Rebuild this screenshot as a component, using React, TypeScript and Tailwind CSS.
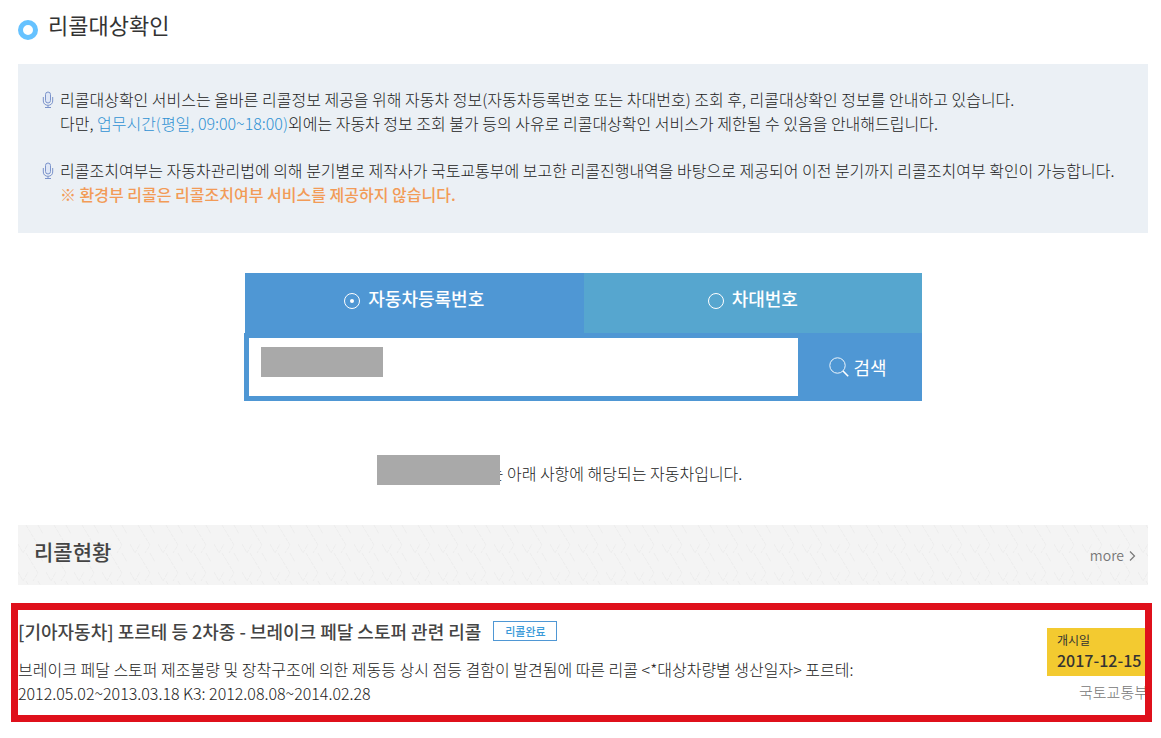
import { useState } from "react";

interface NoticeProps {
  children: React.ReactNode;
}

const MicIcon = () => (
  <svg className="mt-1 h-[18px] w-3 shrink-0" viewBox="0 0 12 18" fill="none" stroke="#7b93cb" aria-hidden="true">
    <rect x="3.5" y="1" width="5" height="11" rx="2.5" fill="#dfe7f6" />
    <path d="M1.3 6v4c0 2.6 2 4.3 4.7 4.3s4.7-1.7 4.7-4.3V6M6 14.3v2M3 16.5h6" />
  </svg>
);

const Notice: React.FC<NoticeProps> = ({ children }) => (
  <li className="flex gap-1.5">
    <MicIcon />
    <p className="leading-6">{children}</p>
  </li>
);

interface TabProps {
  label: string;
  value: string;
  bg: string;
  checked: boolean;
  onSelect: (value: string) => void;
}

const Tab: React.FC<TabProps> = ({ label, value, bg, checked, onSelect }) => (
  <label className={`flex h-15 flex-1 items-center justify-center gap-2 pb-2.5 text-[18px] font-medium text-white ${bg}`}>
    <input
      type="radio"
      name="searchType"
      value={value}
      checked={checked}
      onChange={() => onSelect(value)}
      className="mt-1.5 grid size-4 appearance-none place-items-center rounded-full border border-white before:size-1 before:rounded-full checked:before:bg-white"
    />
    {label}
  </label>
);

export default function RecallCheckPage() {
  const [searchType, setSearchType] = useState("plate");

  return (
    <main className="pt-2 pr-[13px] pb-4 pl-[18px] font-['Noto_Sans_CJK_KR','Noto_Sans',sans-serif] text-[16px] font-light text-[#222]">
      {/* Title */}
      <header className="flex items-center gap-2.5">
        <span className="mt-2 size-5 rounded-full border-[5px] border-[#66c2ff]" />
        <h1 className="pb-1 text-[22px] leading-8 font-normal text-[#333]">리콜대상확인</h1>
      </header>

      {/* Notice */}
      <ul className="mt-5 space-y-[23px] bg-[#ebf0f5] px-6 pt-[23px] pb-[27px]">
        <Notice>
          리콜대상확인 서비스는 올바른 리콜정보 제공을 위해 자동차 정보(자동차등록번호 또는 차대번호) 조회 후, 리콜대상확인 정보를 안내하고 있습니다.
          <br />
          다만, <span className="text-[#3192d3]">업무시간(평일, 09:00~18:00)</span>외에는 자동차 정보 조회 불가 등의 사유로 리콜대상확인 서비스가 제한될 수 있음을 안내해드립니다.
        </Notice>
        <Notice>
          리콜조치여부는 자동차관리법에 의해 분기별로 제작사가 국토교통부에 보고한 리콜진행내역을 바탕으로 제공되어 이전 분기까지 리콜조치여부 확인이 가능합니다.
          <br />
          <strong className="font-medium text-[#f29b57]">※ 환경부 리콜은 리콜조치여부 서비스를 제공하지 않습니다.</strong>
        </Notice>
      </ul>

      {/* Search */}
      <form className="mx-auto mt-10 w-full max-w-[678px]" onSubmit={(e) => e.preventDefault()}>
        <div className="ml-px flex">
          <Tab label="자동차등록번호" value="plate" bg="bg-[#4f97d4]" checked={searchType === "plate"} onSelect={setSearchType} />
          <Tab label="차대번호" value="vin" bg="bg-[#56a6cf]" checked={searchType === "vin"} onSelect={setSearchType} />
        </div>
        <div className="relative flex h-[68px] bg-[#4f97d4] py-[5px] pl-[5px]">
          <input type="text" aria-label="자동차등록번호" className="min-w-0 flex-1 bg-white px-3 outline-none" />
          <span className="absolute top-3.5 left-[17px] h-[30px] w-[122px] bg-[#a9a9a9]" />
          <button type="submit" className="flex w-31 items-center justify-center gap-1 pr-1 text-[18px] font-normal text-white">
            <svg className="size-5" viewBox="0 0 20 20" fill="none" stroke="currentColor" aria-hidden="true">
              <circle cx="8.5" cy="8.5" r="7.7" strokeWidth="0.9" />
              <path d="M14 14l5.2 5.2" strokeWidth="1.6" />
            </svg>
            검색
          </button>
        </div>
      </form>

      {/* Result */}
      <p className="mt-15 text-center leading-6">
        <span className="relative inline-block h-4 w-[65px]">
          <span className="absolute -bottom-[5px] -left-[47px] z-10 h-[30px] w-[123px] bg-[#a9a9a9]" />
        </span>
        는 아래 사항에 해당되는 자동차입니다.
      </p>

      <section className="mt-10">
        <div className="relative flex h-15 items-center justify-between bg-[#f4f4f4] pr-3 pb-1 pl-4">
          <svg className="absolute inset-0 size-full" aria-hidden="true">
            <defs>
              <pattern id="weave" width="28" height="28" patternUnits="userSpaceOnUse">
                <path d="M8 0l12 20l-5 8M0 19l5 9l5-9M20 0l5 9" fill="none" stroke="#ececec" strokeDasharray="4 1" />
              </pattern>
            </defs>
            <rect width="100%" height="100%" fill="url(#weave)" />
          </svg>
          <h2 className="relative pb-0.5 text-[21px] font-medium text-[#444]">리콜현황</h2>
          <a href="#more" className="relative mt-1 flex items-center gap-1 text-[14px] font-[350] text-[#777]">
            more
            <svg className="mt-0.5 h-3 w-2" viewBox="0 0 8 12" fill="none" stroke="currentColor" strokeWidth="1.2" aria-hidden="true">
              <path d="M2 1.5l4.5 4.5l-4.5 4.5" />
            </svg>
          </a>
        </div>

        <article className="relative mt-6 flex justify-between pt-2 pb-[17px]">
          <div className="max-w-[850px]">
            <h3 className="flex items-center gap-3 text-[18px] leading-7 font-medium text-[#444]">
              [기아자동차] 포르테 등 2차종 - 브레이크 페달 스토퍼 관련 리콜
              <span className="flex h-5 w-16 items-center justify-center border border-[#4f97d4] pb-px text-[11px] text-[#3a9ad9]">리콜완료</span>
            </h3>
            <p className="mt-3 leading-6">
              브레이크 페달 스토퍼 제조불량 및 장착구조에 의한 제동등 상시 점등 결함이 발견됨에 따른 리콜 &lt;*대상차량별 생산일자&gt; 포르테: 2012.05.02~2013.03.18 K3: 2012.08.08~2014.02.28
            </p>
          </div>
          <div className="mt-[11px] w-[101px] text-right">
            <dl className="h-12 bg-[#f3ca30] px-2.5 pt-0.5 text-left text-[#333]">
              <dt className="text-[12px] leading-5 font-normal">개시일</dt>
              <dd className="text-[16px] leading-5 font-medium whitespace-nowrap">2017-12-15</dd>
            </dl>
            <p className="mt-1 text-[15px] leading-6 text-[#777]">국토교통부</p>
          </div>
          <span className="pointer-events-none absolute -top-1.5 -right-1 bottom-0 -left-[7px] border-[7px] border-[#df101b]" />
        </article>
      </section>
    </main>
  );
}
